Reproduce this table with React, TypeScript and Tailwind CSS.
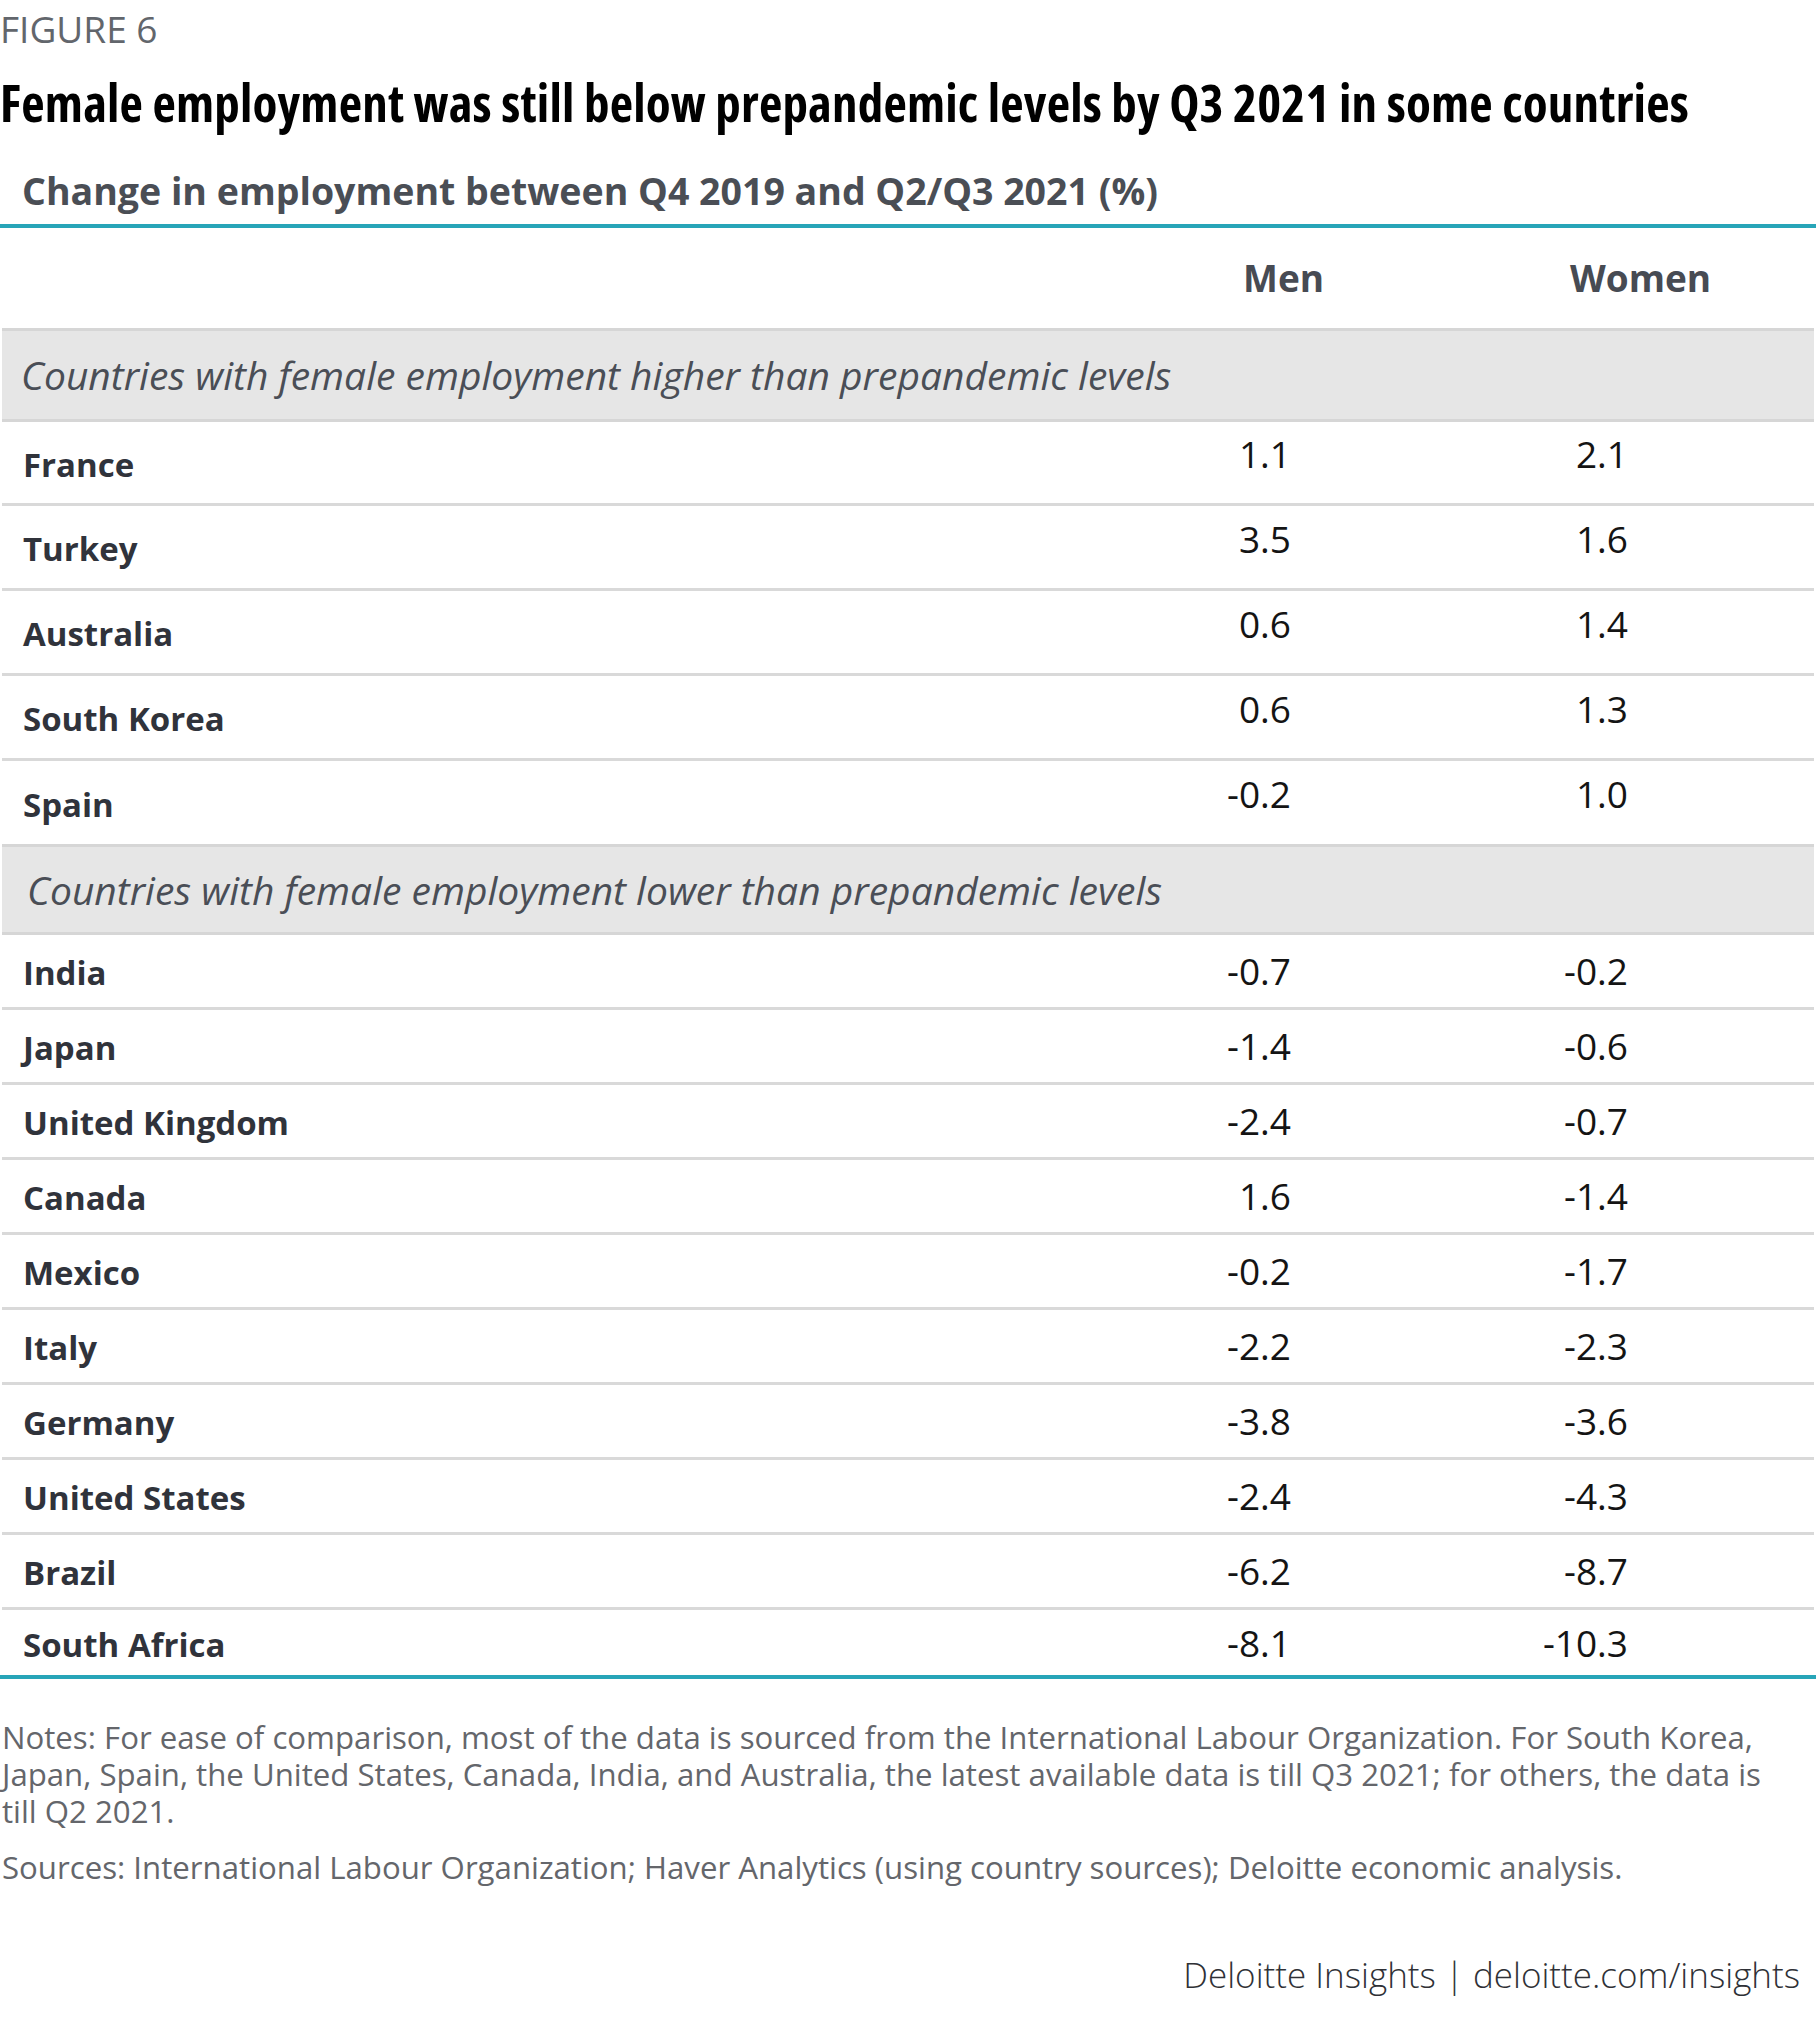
import React from "react";

type Row = { name: string; men: string; women: string };

const higher: Row[] = [
  { name: "France", men: "1.1", women: "2.1" },
  { name: "Turkey", men: "3.5", women: "1.6" },
  { name: "Australia", men: "0.6", women: "1.4" },
  { name: "South Korea", men: "0.6", women: "1.3" },
  { name: "Spain", men: "-0.2", women: "1.0" },
];

const higherHeights = ["h-[84px]", "h-[85px]", "h-[85px]", "h-[85px]", "h-[83px]"];

const lower: Row[] = [
  { name: "India", men: "-0.7", women: "-0.2" },
  { name: "Japan", men: "-1.4", women: "-0.6" },
  { name: "United Kingdom", men: "-2.4", women: "-0.7" },
  { name: "Canada", men: "1.6", women: "-1.4" },
  { name: "Mexico", men: "-0.2", women: "-1.7" },
  { name: "Italy", men: "-2.2", women: "-2.3" },
  { name: "Germany", men: "-3.8", women: "-3.6" },
  { name: "United States", men: "-2.4", women: "-4.3" },
  { name: "Brazil", men: "-6.2", women: "-8.7" },
];

function Band({ text, pl, h }: { text: string; pl: string; h: string }) {
  return (
    <div className={`mx-[2px] ${h} border-y-[3px] border-[#d6d6d6] bg-[#e6e6e6] flex items-center ${pl}`}>
      <span className="text-[39px] leading-[48px] italic text-[#4a4e56]">{text}</span>
    </div>
  );
}

function DataRow({ r, h, border, raise }: { r: Row; h: string; border: boolean; raise: boolean }) {
  return (
    <div
      className={`mx-[2px] grid grid-cols-[1180px_331px_301px] items-center ${h} ${
        border ? "border-b-[3px] border-[#d9d9d9]" : ""
      }`}
    >
      <div className="pl-[21px] pt-[4px] text-[33px] leading-[40px] font-bold text-[#30333b]">{r.name}</div>
      <div className={`text-right pr-[222px] text-[37px] leading-[44px] text-[#141414] ${raise ? "pb-[17px]" : ""}`}>
        {r.men}
      </div>
      <div className={`text-right pr-[186px] text-[37px] leading-[44px] text-[#141414] ${raise ? "pb-[17px]" : ""}`}>
        {r.women}
      </div>
    </div>
  );
}

export default function App() {
  return (
    <div className="w-[1816px] h-[2021px] bg-white font-['Open_Sans',sans-serif] pt-[5px]">
      <div className="h-[48px] text-[37px] leading-[48px] text-[#62666c]">FIGURE 6</div>
      <h1 className="mt-[19px] h-[60px] text-[51px] leading-[60px] font-bold tracking-[0.2px] text-black [font-stretch:75%] whitespace-nowrap">
        Female employment was still below prepandemic levels by Q3 2021 in some countries
      </h1>
      <div className="mt-[39px] h-[40px] pl-[22px] text-[37.5px] leading-[40px] font-bold text-[#4a4e55] whitespace-nowrap">
        Change in employment between Q4 2019 and Q2/Q3 2021 (%)
      </div>
      <div className="mt-[13px] h-[4px] bg-[#27a5b8]" />
      <div className="mx-[2px] grid grid-cols-[1180px_331px_301px] h-[100px] items-center text-[37px] leading-[50px] font-bold text-[#474b53]">
        <div />
        <div className="pl-[61px]">Men</div>
        <div className="pl-[57px]">Women</div>
      </div>
      <Band text="Countries with female employment higher than prepandemic levels" pl="pl-[19px]" h="h-[94px]" />
      {higher.map((r, i) => (
        <DataRow key={r.name} r={r} h={higherHeights[i]} border={i < higher.length - 1} raise />
      ))}
      <Band text="Countries with female employment lower than prepandemic levels" pl="pl-[25px]" h="h-[91px]" />
      {lower.map((r) => (
        <DataRow key={r.name} r={r} h="h-[75px]" border raise={false} />
      ))}
      <DataRow r={{ name: "South Africa", men: "-8.1", women: "-10.3" }} h="h-[65px]" border={false} raise={false} />
      <div className="h-[4px] bg-[#27a5b8]" />
      <div className="mt-[40px] pl-[2px] text-[31.2px] leading-[37px] font-normal text-[#64666b] whitespace-nowrap">
        <div>
          Notes: For ease of comparison, most of the data is sourced from the International Labour Organization. For South Korea,
        </div>
        <div>
          Japan, Spain, the United States, Canada, India, and Australia, the latest available data is till Q3 2021; for others, the data is
        </div>
        <div>till Q2 2021.</div>
        <div className="mt-[19px]">
          Sources: International Labour Organization; Haver Analytics (using country sources); Deloitte economic analysis.
        </div>
      </div>
      <div className="mt-[69px] pr-[16px] text-right text-[35px] leading-[40px] font-light text-[#2f3136] whitespace-nowrap">
        Deloitte Insights | deloitte.com/insights
      </div>
    </div>
  );
}
